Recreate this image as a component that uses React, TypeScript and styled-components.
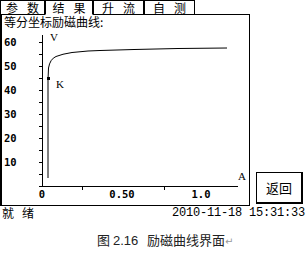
import React from "react";
import styled, { createGlobalStyle } from "styled-components";

const GlobalStyle = createGlobalStyle`
  html, body {
    margin: 0;
    padding: 0;
    background: #fff;
  }
  body {
    font-family: "Noto Sans CJK SC", "DejaVu Sans", sans-serif;
    color: #000;
  }
`;

const Screen = styled.div`
  width: 307px;
`;

const TabBar = styled.div`
  display: flex;
  width: 250px;
  height: 15px;
`;

const Tab = styled.div<{ $w: number; $active?: boolean }>`
  width: ${(p) => p.$w}px;
  box-sizing: border-box;
  border: 1px solid #000;
  border-bottom-color: ${(p) => (p.$active ? "#fff" : "#000")};
  display: flex;
  align-items: center;
  justify-content: center;
  gap: 9px;
  font-size: 12px;
  line-height: 13px;
  white-space: nowrap;
`;

const TabFill = styled.div`
  flex: 1;
  border-bottom: 1px solid #000;
`;

const Body = styled.div`
  display: flex;
`;

const Panel = styled.div`
  width: 250px;
  height: 191px;
  box-sizing: border-box;
  border-left: 2px solid #000;
  border-right: 1px solid #000;
  border-bottom: 1px solid #000;
  display: flex;
  flex-direction: column;
`;

const Title = styled.div`
  height: 14px;
  padding-left: 2px;
  font-size: 12px;
  line-height: 14px;
`;

const Chart = styled.svg`
  display: block;
  width: 247px;
  height: 176px;
`;

const Side = styled.div`
  flex: 1;
  display: flex;
  align-items: flex-end;
  padding: 0 0 2px 6px;
`;

const BackButton = styled.div`
  width: 47px;
  height: 32px;
  box-sizing: border-box;
  border: 1px solid #000;
  border-right-width: 2px;
  border-bottom-width: 2px;
  display: flex;
  align-items: center;
  justify-content: center;
  font-size: 13px;
`;

const StatusBar = styled.div`
  display: flex;
  justify-content: space-between;
  align-items: center;
  height: 14px;
  padding: 0 2px;
  font-size: 12px;
  line-height: 14px;
`;

const Ready = styled.span`
  display: flex;
  gap: 8px;
`;

const Clock = styled.span`
  font-family: "Liberation Mono", "DejaVu Sans Mono", monospace;
  font-size: 12px;
  letter-spacing: -0.2px;
`;

const Caption = styled.div`
  margin-top: 12px;
  padding-left: 97px;
  font-size: 13px;
  line-height: 15px;
  color: #222;
  white-space: pre;
`;

const Num = styled.span`
  font-family: "Liberation Sans", Arial, sans-serif;
  font-size: 13px;
`;

const Mark = styled.span`
  color: #999;
  font-size: 10px;
`;

const tabs = [
  { label: "参数", w: 45 },
  { label: "结果", w: 48, active: true },
  { label: "升流", w: 51 },
  { label: "自测", w: 51 },
];

const yLabels = [60, 50, 40, 30, 20, 10];
const yTicks = Array.from({ length: 13 }, (_, i) => 186 - i * 12);

const curve =
  "M48,178 L48,80 L48.5,68 Q50,59 56,56.5 Q62,54 72,52.5 L88,51 L100,50.5 L134,49.5 L178,48.5 L227,48";

const numFont = {
  fontFamily: '"DejaVu Sans Mono", monospace',
  fontWeight: 700,
  fontSize: 10.5,
};

const serif = {
  fontFamily: '"Liberation Serif", serif',
  fontSize: 11,
};

export default function App() {
  return (
    <>
      <GlobalStyle />
      <Screen>
        <TabBar>
          {tabs.map((t) => (
            <Tab key={t.label} $w={t.w} $active={t.active}>
              {t.label.split("").map((c) => (
                <span key={c}>{c}</span>
              ))}
            </Tab>
          ))}
          <TabFill />
        </TabBar>
        <Body>
          <Panel>
            <Title>等分坐标励磁曲线:</Title>
            <Chart viewBox="2 29 247 176">
              <g stroke="#000" strokeWidth={1} shapeRendering="crispEdges">
                <line x1={42.5} y1={35} x2={42.5} y2={187} />
                <line x1={42} y1={186.5} x2={238} y2={186.5} />
                {yTicks.map((y) => (
                  <line key={y} x1={39} y1={y + 0.5} x2={42} y2={y + 0.5} />
                ))}
                <line x1={82.5} y1={187} x2={82.5} y2={190} />
                <line x1={164.5} y1={187} x2={164.5} y2={190} />
              </g>
              <g fill="#000" style={numFont}>
                {yLabels.map((v) => (
                  <text key={v} x={4} y={186 - v * 2.4 + 4}>
                    {v}
                  </text>
                ))}
                <text x={42} y={198} textAnchor="middle">
                  0
                </text>
                <text x={122} y={198} textAnchor="middle">
                  0.50
                </text>
                <text x={201} y={198} textAnchor="middle">
                  1.0
                </text>
              </g>
              <g fill="#000" style={serif}>
                <text x={50} y={41}>
                  V
                </text>
                <text x={56} y={88}>
                  K
                </text>
                <text x={238} y={180}>
                  A
                </text>
              </g>
              <path d={curve} fill="none" stroke="#000" strokeWidth={1} />
              <rect x={47} y={77} width={3} height={3} fill="#000" />
            </Chart>
          </Panel>
          <Side>
            <BackButton>返回</BackButton>
          </Side>
        </Body>
        <StatusBar>
          <Ready>
            <span>就</span>
            <span>绪</span>
          </Ready>
          <Clock>2010-11-18 15:31:33</Clock>
        </StatusBar>
      </Screen>
      <Caption>
        图 <Num>2.16</Num>{"   "}励磁曲线界面<Mark>↵</Mark>
      </Caption>
    </>
  );
}
